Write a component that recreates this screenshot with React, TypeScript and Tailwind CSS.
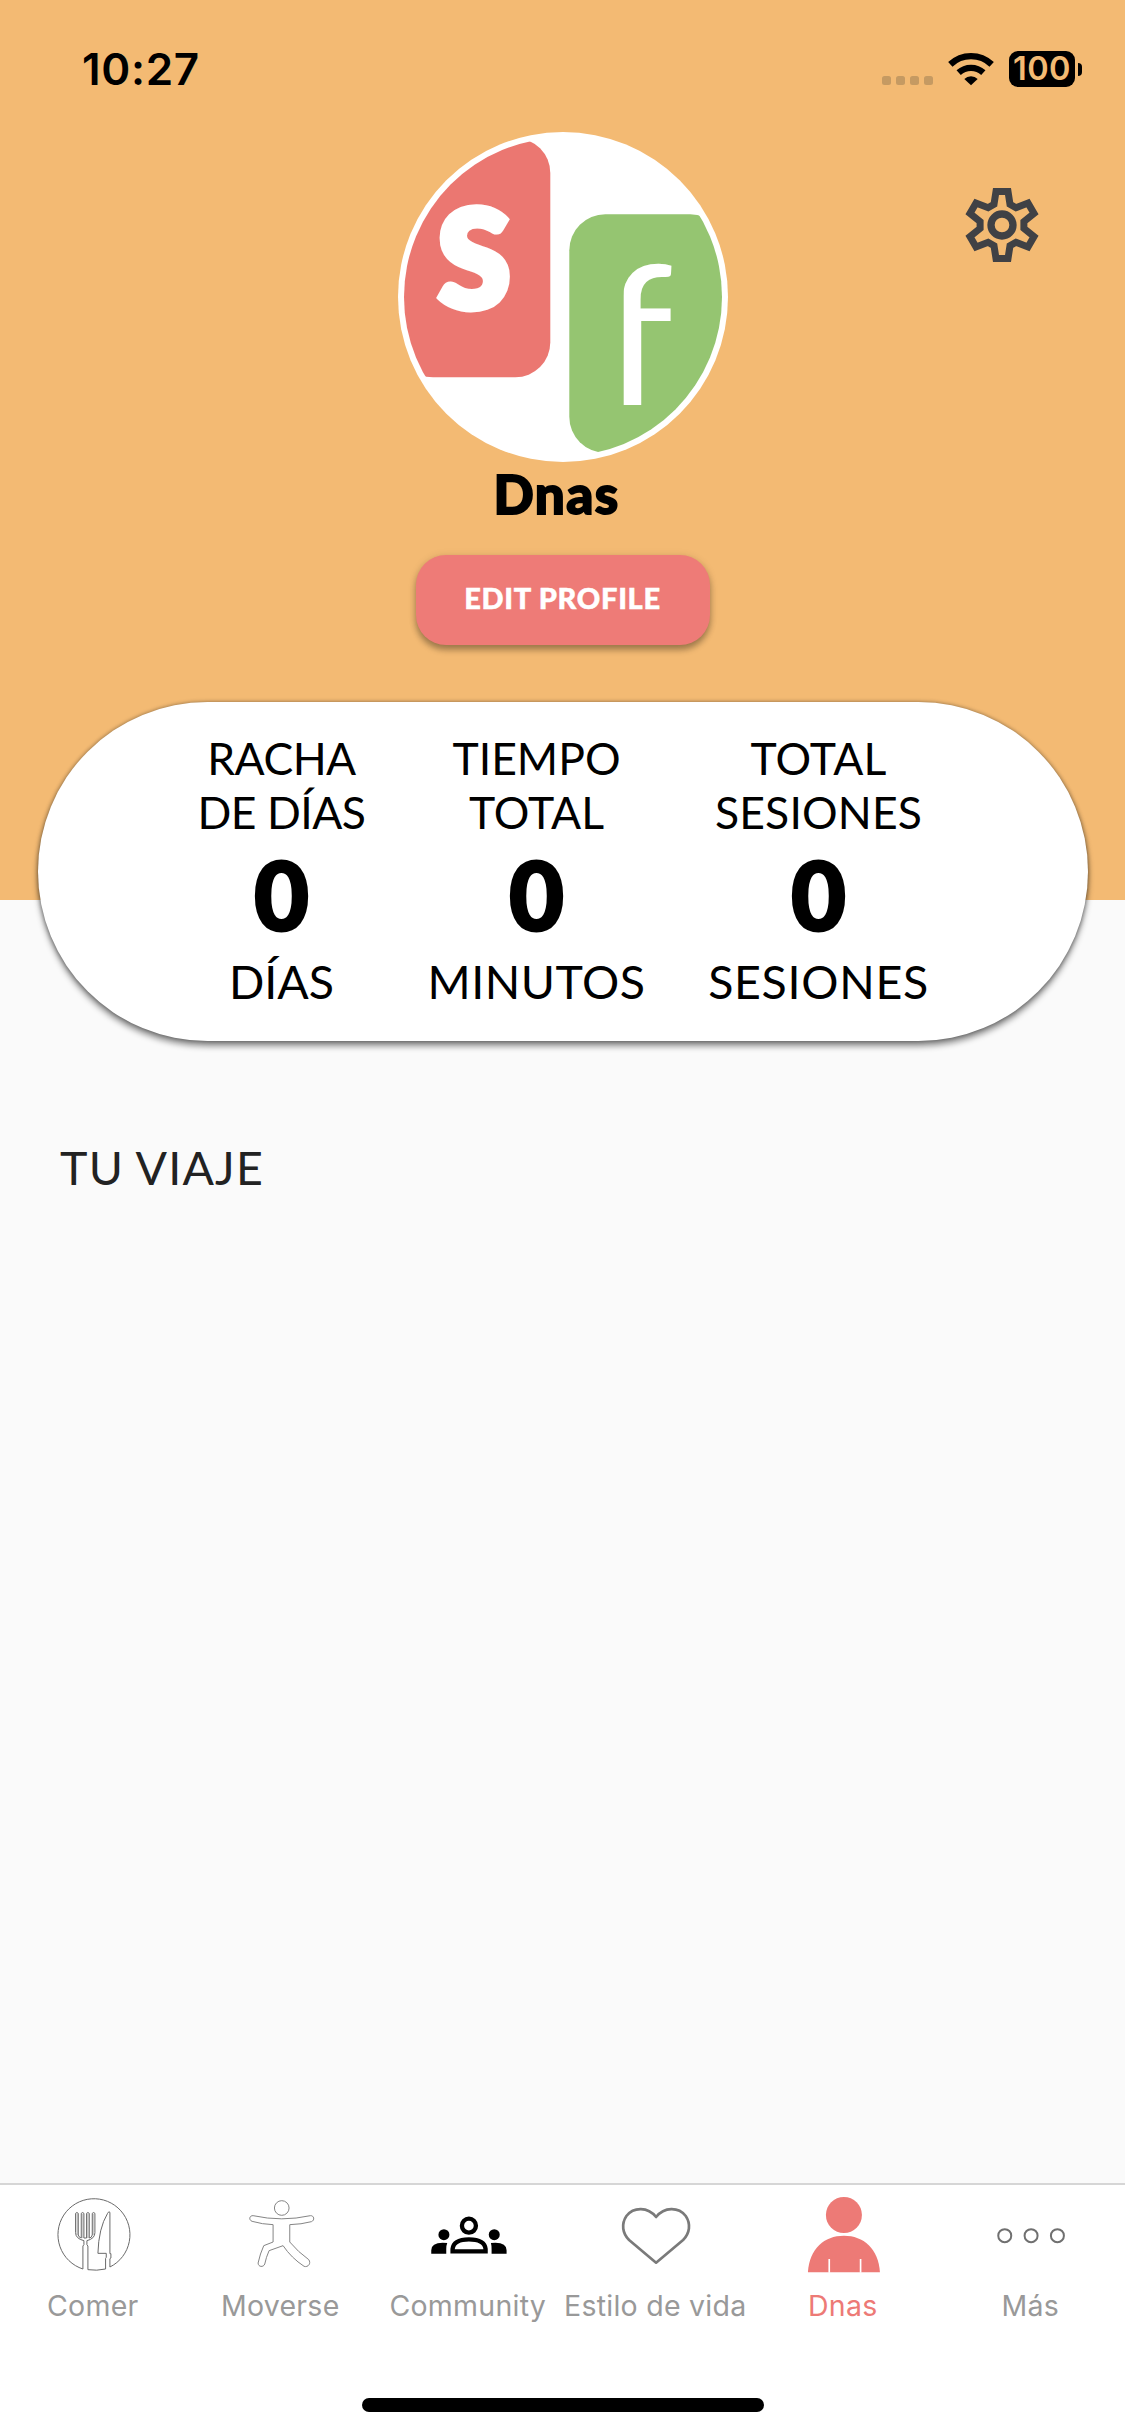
import React from "react";

const COG_POINTS = [0, 1, 2, 3, 4, 5]
  .flatMap((k) => {
    const a = (k * Math.PI) / 3;
    return [
      [-24, -62],
      [-18, -100.5],
      [18, -100.5],
      [24, -62],
    ].map(
      ([x, y]) =>
        `${(x * Math.cos(a) - y * Math.sin(a)).toFixed(2)},${(x * Math.sin(a) + y * Math.cos(a)).toFixed(2)}`
    );
  })
  .join(" ");

function StatusBar() {
  return (
    <div className="flex h-[132px] items-start justify-between pl-[82px] pr-[43px] font-['Inter']">
      <span className="mt-[42px] text-[44px] leading-[54px] font-semibold tracking-[0.7px] text-black">10:27</span>
      <div className="mt-[51px] flex items-start">
        <div className="mt-[25px] flex gap-[5px]">
          {[0, 1, 2, 3].map((i) => (
            <span key={i} className="h-[9px] w-[9px] rounded-[2.5px] bg-[#c59a62]" />
          ))}
        </div>
        <svg className="mt-px ml-[15px] h-[34px] w-[46px]" viewBox="264 65 138 102">
          <path d="M333 165 L313 146 A29 29 0 0 1 353 146 Z" />
          <path d="M296 127 A55 55 0 0 1 370 127" fill="none" stroke="#000" strokeWidth="19" />
          <path d="M271 102 A90 90 0 0 1 395 102" fill="none" stroke="#000" strokeWidth="19" />
        </svg>
        <div className="ml-[15px] flex h-[36px] w-[66px] items-center justify-center rounded-[9px] bg-black text-[32.5px] leading-[36px] font-semibold tracking-[0.4px] text-[#f3ba73]">
          100
        </div>
        <span className="mt-[12px] ml-[3px] h-[13px] w-[4px] rounded-r-full bg-black" />
      </div>
    </div>
  );
}

function Avatar() {
  return (
    <svg className="h-[330px] w-[330px] overflow-visible rounded-full bg-white" viewBox="0 0 330 330">
      <defs>
        <clipPath id="disc">
          <circle cx="165" cy="165" r="159" />
        </clipPath>
        <clipPath id="stem">
          <rect x="225.7" y="120" width="49" height="153" />
        </clipPath>
      </defs>
      <g clipPath="url(#disc)">
        <rect x="0" y="6" width="152.3" height="239.3" rx="35" fill="#eb7771" />
        <rect x="171.3" y="82.3" width="157" height="238.5" rx="36" fill="#95c571" />
      </g>
      <text
        transform="translate(37.5 175.5) scale(0.9 1)"
        fontFamily="Lato"
        fontWeight="900"
        fontSize="194"
        fill="#fff"
        stroke="#fff"
        strokeWidth="5"
      >
        s
      </text>
      <g clipPath="url(#stem)">
        <text transform="translate(203.5 273) scale(1.06 1)" fontFamily="Lato" fontWeight="400" fontSize="194" fill="#fff">
          f
        </text>
      </g>
    </svg>
  );
}

function Settings() {
  return (
    <svg className="h-[76px] w-[74px]" viewBox="-111 -114 222 228" fill="none" stroke="#404145">
      <polygon points={COG_POINTS} strokeWidth="21" />
      <circle r="33" strokeWidth="22" />
    </svg>
  );
}

const STATS = [
  { width: "w-[170px]", a: "RACHA", b: "DE DÍAS", unit: "DÍAS", top: "tracking-[-0.5px]", bottom: "" },
  { width: "w-[220px]", a: "TIEMPO", b: "TOTAL", unit: "MINUTOS", top: "", bottom: "tracking-[0.5px]" },
  { width: "w-[224px]", a: "TOTAL", b: "SESIONES", unit: "SESIONES", top: "tracking-[0.15px]", bottom: "tracking-[0.7px]" },
];

function StatsCard() {
  return (
    <section className="mx-auto -mt-[198px] flex h-[339px] w-[1050px] justify-center gap-[60px] rounded-full bg-white pl-[2px] shadow-[0_5px_6px_rgba(0,0,0,0.45),0_0_4px_rgba(0,0,0,0.4)]">
      {STATS.map((s) => (
        <div key={s.width} className={`flex flex-col items-center whitespace-nowrap text-black ${s.width}`}>
          <span className={`mt-[29px] text-[44.5px] leading-[54px] ${s.top}`}>{s.a}</span>
          <span className={`text-[44.5px] leading-[54px] ${s.top}`}>{s.b}</span>
          <span className="mt-[5px] text-[94px] leading-[100px] font-black [-webkit-text-stroke:3px_#000]">0</span>
          <span className={`mt-[9px] text-[46.5px] leading-[56px] ${s.bottom}`}>{s.unit}</span>
        </div>
      ))}
    </section>
  );
}

const TABS = [
  {
    label: "Comer",
    box: "71.25 75 240 240",
    icon: (
      <g fill="none" stroke="#6a6a6a" strokeWidth="3">
        <path d="M141 131 V196 M157 131 V204 M173 131 V204 M189 131 V196" strokeWidth="5" stroke="#cfcfcf" />
        <path d="M158 297 A108 108 0 1 1 239 291 L239 266 L242 264 V251 H239 V127 Q236 122 232 130 Q205 175 203 250 H228 V262 L226 265 V297 Q199 303 173 299 V228 L170 224 V212" />
        <path d="M158 297 V228 L161 224 V212 Q136 206 136 188 V130 Q140 125 144 130 V195 Q147 204 153 204 V130 Q157 125 161 130 V204 H169 V130 Q173 125 177 130 V204 Q184 204 186 195 V130 Q190 125 194 130 V188 Q194 206 170 212" />
      </g>
    ),
  },
  {
    label: "Moverse",
    box: "633.75 75 240 240",
    icon: (
      <g fill="none" stroke="#858585" strokeWidth="3">
        <circle cx="756" cy="114" r="22" />
        <path d="M670 137 Q756 156 842 137 C853 136 856 151 845 155 Q815 163 780 164 V216 Q805 246 837 269 C845 280 835 293 823 289 Q785 264 760 227 L718 242 Q709 262 705 282 C701 293 685 291 685 279 Q691 251 702 227 L730 216 V164 Q698 163 667 154 C656 150 659 136 670 137 Z" />
      </g>
    ),
  },
  {
    label: "Community",
    box: "176.25 75 240 240",
    icon: (
      <g>
        <circle cx="296" cy="167" r="21" fill="none" stroke="#000" strokeWidth="13" />
        <path d="M247 244 V237 Q250 208 296 208 Q343 208 346 237 V244 Z" fill="none" stroke="#000" strokeWidth="13" />
        <circle cx="221" cy="194" r="16.5" />
        <circle cx="372" cy="194" r="16.5" />
        <path d="M231 219 Q183 214 183 241 V251 H228 V237 Q228 226 231 219 Z" />
        <path d="M362 219 Q409 214 409 241 V251 H364 V237 Q364 226 362 219 Z" />
      </g>
    ),
  },
  {
    label: "Estilo de vida",
    box: "738.75 75 240 240",
    icon: (
      <path
        d="M859 141 C834 110 792 110 770 138 C754 162 758 190 778 210 L859 278 L940 210 C960 190 964 162 948 138 C926 110 884 110 859 141 Z"
        fill="none"
        stroke="#7a7a7a"
        strokeWidth="8"
        strokeLinejoin="round"
      />
    ),
  },
  {
    label: "Dnas",
    box: "131.25 75 240 240",
    icon: (
      <g fill="#ed7a76">
        <circle cx="251" cy="135" r="54" />
        <path d="M143 307 C147 236 192 197 251 197 C310 197 355 236 359 307 Z" />
        <path d="M207 267 V308 M301 267 V308" stroke="#fff" strokeWidth="5" />
      </g>
    ),
  },
  {
    label: "Más",
    box: "693.75 75 240 240",
    icon: (
      <g fill="none" stroke="#707070" strokeWidth="6">
        <circle cx="735" cy="197" r="19.5" />
        <circle cx="814" cy="197" r="19.5" />
        <circle cx="893" cy="197" r="19.5" />
      </g>
    ),
  },
];

function TabBar() {
  return (
    <nav className="flex h-[253px] flex-col border-t-2 border-[#d6d6d6] bg-white font-['Inter']">
      <div className="grid grid-cols-6">
        {TABS.map((t) => (
          <div key={t.label} className="flex flex-col items-center">
            <svg className="mt-[10px] h-[80px] w-[80px]" viewBox={t.box}>
              {t.icon}
            </svg>
            <span
              className={`mt-[14px] pr-[2px] text-[28.5px] leading-[34px] tracking-[0.25px] whitespace-nowrap ${t.label === "Dnas" ? "text-[#ed7a76]" : "text-[#999999]"}`}
            >
              {t.label}
            </span>
          </div>
        ))}
      </div>
      <div className="mx-auto mt-[75px] h-[14px] w-[402px] rounded-full bg-black" />
    </nav>
  );
}

export default function App() {
  return (
    <div className="flex h-[2436px] w-[1125px] flex-col overflow-hidden bg-[#fafafa] font-['Lato',sans-serif]">
      <header className="h-[900px] shrink-0 bg-[#f3ba73]">
        <StatusBar />
        <div className="grid grid-cols-[1fr_330px_1fr]">
          <div />
          <Avatar />
          <div className="flex items-start justify-end pt-[55px] pr-[86px]">
            <Settings />
          </div>
        </div>
        <div className="flex flex-col items-center">
          <h1 className="pr-[12px] text-[53px] leading-[64px] font-black tracking-[1.4px] text-black [-webkit-text-stroke:1.8px_#000]">
            Dnas
          </h1>
          <button className="mt-[29px] h-[90px] w-[294px] rounded-[30px] bg-[#ee7b77] pb-[5px] text-[29px] font-black tracking-[0.7px] text-white shadow-[0_5px_6px_rgba(0,0,0,0.3),0_1px_8px_rgba(0,0,0,0.12)] [-webkit-text-stroke:0.5px_#fff]">
            EDIT PROFILE
          </button>
        </div>
      </header>
      <StatsCard />
      <main className="flex-1 px-[60px] pt-[98px]">
        <h2 className="text-[46.5px] leading-[56px] tracking-[1.2px] text-[#222222]">TU VIAJE</h2>
      </main>
      <TabBar />
    </div>
  );
}
